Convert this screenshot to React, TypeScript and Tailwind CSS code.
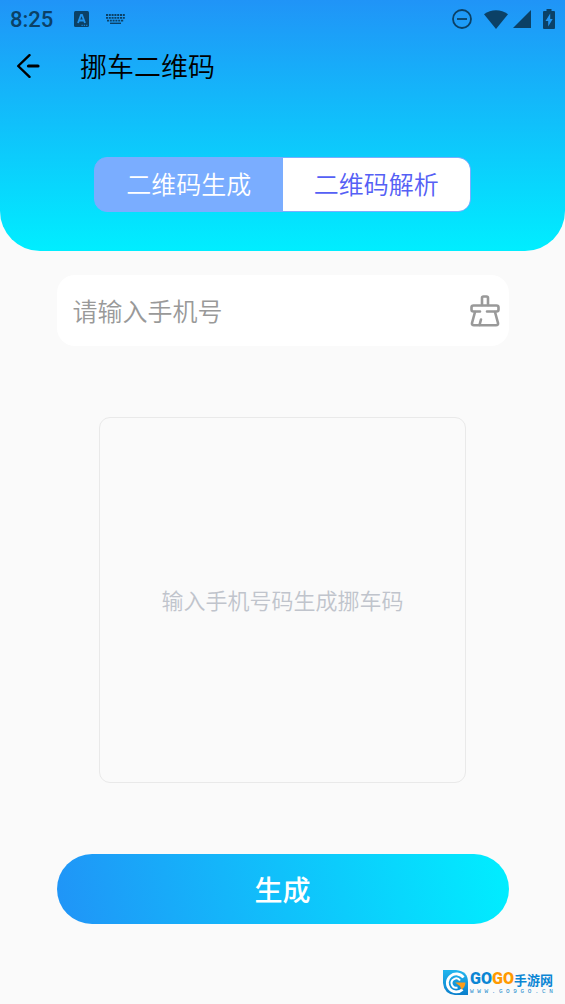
import { useState } from "react";
import clsx from "clsx";

const StatusBar = () => (
  <div className="flex h-[38px] items-center justify-between px-[10px] text-[#0b4166]">
    <div className="flex items-center">
      <span className="w-[64px] pt-0.5 font-[Roboto] text-[22px] leading-none font-medium">8:25</span>
      <svg className="h-4 w-[15px]" viewBox="0 0 15 16" aria-hidden="true">
        <rect width="15" height="16" rx="1.5" fill="currentColor" />
        <path d="M4 12 7 4h1l3 8M5.2 9.5h4.6" fill="none" stroke="#1f93ee" strokeWidth="1.8" />
        <path d="M7.5 14.3h1.3M9.8 14.3h1.3M12.1 14.3h1.3" stroke="#1f93ee" strokeWidth="1" />
      </svg>
      <svg className="ml-[17px] h-[10px] w-[19px]" viewBox="0 0 19 10" aria-hidden="true">
        <path
          d="M0 1h19M0 3.8h19M1 6.6h17"
          fill="none"
          stroke="currentColor"
          strokeWidth="1.8"
          strokeDasharray="2 0.8"
        />
        <path d="M4 9.3h11" stroke="currentColor" strokeWidth="1.4" />
      </svg>
    </div>
    <div className="flex items-center">
      <svg className="h-5 w-5" viewBox="0 0 20 20" fill="none" stroke="currentColor" strokeWidth="1.8" aria-hidden="true">
        <circle cx="10" cy="10" r="9" />
        <path d="M5 10h10" />
      </svg>
      <svg className="ml-3 h-[19px] w-6" viewBox="0 0 24 19" fill="currentColor" aria-hidden="true">
        <path d="M0 4.2C7-1.2 17-1.2 24 4.2L12 19Z" />
      </svg>
      <svg className="ml-[5px] h-[18px] w-[18px]" viewBox="0 0 18 18" fill="currentColor" aria-hidden="true">
        <path d="M18 0v18H0Z" />
      </svg>
      <svg className="ml-3 h-5 w-3" viewBox="0 0 12 20" fill="currentColor" aria-hidden="true">
        <path d="M3.5 0h5v2H11q1 0 1 1v16q0 1-1 1H1q-1 0-1-1V3q0-1 1-1h2.5Z" />
        <path d="M7.2 4.5 2.5 12H5.2v5.5L9.7 10H7.2Z" fill="#2196f3" />
      </svg>
    </div>
  </div>
);

const BackIcon = () => (
  <svg
    className="h-6 w-6"
    viewBox="0 0 24 24"
    fill="none"
    stroke="currentColor"
    strokeLinecap="round"
    strokeLinejoin="round"
    aria-hidden="true"
  >
    <path d="M13.5 1.2 2.2 12l11.3 10.8" strokeWidth="2.4" />
    <path d="M12.5 12H22" strokeWidth="3.2" />
  </svg>
);

const ClearIcon = () => (
  <svg
    className="h-8 w-[30px]"
    viewBox="0 0 30 32"
    fill="none"
    stroke="currentColor"
    strokeWidth="2.6"
    strokeLinecap="round"
    strokeLinejoin="round"
    aria-hidden="true"
  >
    <path d="M12 10V3q0-1.5 1.5-1.5h3Q18 1.5 18 3v7" />
    <path d="M10 16.5H3.5Q1.5 16.5 1.5 14.5V12.5q0-2 2-2h23q2 0 2 2v2q0 2-2 2H17" />
    <path d="M5 17 2 28q-.5 2.3 2 2.3H26q2.5 0 2-2.3L25 17" />
    <path d="M11 24.5 9.5 30" />
  </svg>
);

const Watermark = () => (
  <div className="absolute right-3 bottom-[9px] flex items-center gap-0.5">
    <svg className="h-[25px] w-[25px]" viewBox="0 0 25 25" aria-hidden="true">
      <defs>
        <linearGradient id="badge" x1="0" y1="0" x2="0" y2="1">
          <stop offset="0" stopColor="#22b6ee" />
          <stop offset="1" stopColor="#0a7fcc" />
        </linearGradient>
      </defs>
      <path d="M0 0H13Q25 1 25 12V25H12Q1 24 0 13Z" fill="url(#badge)" />
      <path d="M20.5 7.5A9 9 0 1 0 19.5 19.5" fill="none" stroke="#fff" strokeWidth="2.8" />
      <path d="M17 10.5A4.6 4.6 0 1 0 14.5 17.5" fill="none" stroke="#fff" strokeWidth="2" />
      <path d="M12 12.5H22.5Q22 17.5 18.5 19.5L17 16Z" fill="#ff9c16" />
    </svg>
    <div className="flex flex-col">
      <div className="flex h-[18px] items-center text-[#0b86d4]">
        <span className="font-[Roboto] text-[16px] leading-none font-black">
          GO<span className="text-[#ff9900]">GO</span>
        </span>
        <span className="text-[13px] leading-none font-bold">手游网</span>
      </div>
      <span className="flex justify-between font-['Liberation_Mono',monospace] text-[6px] leading-[7px] text-[#1689cc]">
        {"WWW.GO9GO.CN".split("").map((char, index) => (
          <span key={index}>{char}</span>
        ))}
      </span>
    </div>
  </div>
);

const tabs = ["二维码生成", "二维码解析"];

export default function App() {
  const [activeTab, setActiveTab] = useState(0);
  const [phone, setPhone] = useState("");

  return (
    <div className="relative flex min-h-screen flex-col items-center bg-[#fafafa] font-['Noto_Sans_CJK_SC',sans-serif] font-[350]">
      <header className="w-full rounded-b-[40px] bg-linear-to-b/srgb from-[#2094f7] to-[#00eeff] pb-[39px]">
        <StatusBar />
        <div className="flex h-14 items-center gap-10 px-4 text-black">
          <button type="button" aria-label="返回">
            <BackIcon />
          </button>
          <h1 className="pb-0.5 text-[27px] leading-none font-[350]">挪车二维码</h1>
        </div>
        <div className="mx-auto mt-[63px] grid h-[55px] w-2/3 grid-cols-2 overflow-hidden rounded-[13px] border border-[#7aadff] bg-[#7aadff]">
          {tabs.map((tab, index) => (
            <button
              key={tab}
              type="button"
              aria-pressed={activeTab === index}
              onClick={() => setActiveTab(index)}
              className={clsx(
                "pb-0.5 text-[25px] leading-none",
                index === 0 ? "rounded-l-[11px]" : "rounded-r-[11px]",
                activeTab === index ? "bg-[#7aadff] text-white" : "bg-white text-[#5560f5]"
              )}
            >
              {tab}
            </button>
          ))}
        </div>
      </header>

      <main className="flex w-4/5 flex-col items-center pt-6 pb-20">
        <div className="flex h-[71px] w-full items-center rounded-[18px] bg-white pr-[9px] pl-4 text-[#999999]">
          <input
            type="tel"
            aria-label="手机号"
            placeholder="请输入手机号"
            value={phone}
            onChange={(e) => setPhone(e.target.value)}
            className="h-full min-w-0 flex-1 bg-transparent pb-0.5 text-[25px] outline-none placeholder:text-[#999999]"
          />
          <button type="button" aria-label="清空" onClick={() => setPhone("")}>
            <ClearIcon />
          </button>
        </div>

        <div className="mt-[71px] flex aspect-square w-[81%] items-center justify-center rounded-[11px] border border-[#e9e9e9]">
          <p className="pb-0.5 text-[22px] leading-none text-[#c0c4cc]">输入手机号码生成挪车码</p>
        </div>

        <button
          type="button"
          className="mt-[71px] h-[70px] w-full rounded-full bg-linear-80/srgb from-[#2094f7] to-[#00eeff] text-[28px] leading-none font-medium text-white"
        >
          生成
        </button>
      </main>

      <Watermark />
    </div>
  );
}
